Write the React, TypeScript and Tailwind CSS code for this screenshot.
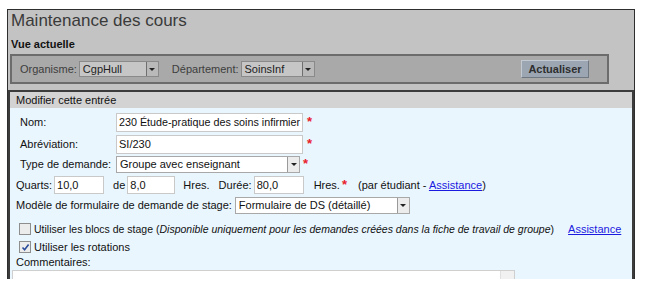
import { ReactNode } from "react";

const Star = () => (
  <span className="self-start text-[13px] font-bold leading-[12px] text-[#e8202a]">*</span>
);

const Arrow = ({ dark }: { dark?: boolean }) => (
  <span
    className={`flex h-full w-[12px] shrink-0 items-center justify-center border-l ${
      dark ? "border-[#6f6f6f] bg-[#b9b9b9]" : "border-[#9a9a9a] bg-[#ececec]"
    }`}
  >
    <span className="h-0 w-0 border-x-[3px] border-t-[3px] border-x-transparent border-t-[#222]" />
  </span>
);

const Select = ({
  value,
  className,
  dark,
}: {
  value: string;
  className: string;
  dark?: boolean;
}) => (
  <div
    className={`flex items-center border ${
      dark ? "border-[#8a8a8a] bg-[#c6c6c6] text-[#222]" : "border-[#a8a8a8] bg-white text-[#111]"
    } ${className}`}
  >
    <span className="flex-1 truncate pl-[3px]">{value}</span>
    <Arrow dark={dark} />
  </div>
);

const Input = ({ value, className }: { value: string; className: string }) => (
  <div
    className={`flex items-center overflow-hidden whitespace-nowrap border border-[#c9c9c9] bg-white pl-[2px] text-[#111] ${className}`}
  >
    {value}
  </div>
);

const Check = ({ checked }: { checked?: boolean }) => (
  <span className="flex h-[12px] w-[12px] shrink-0 items-center justify-center border border-[#8e8e8e] bg-[#ececec]">
    {checked && (
      <svg width="9" height="9" viewBox="0 0 9 9">
        <path d="M1.5 4.5 L3.6 6.8 L7.6 1.5" fill="none" stroke="#2c4d9c" strokeWidth="1.6" />
      </svg>
    )}
  </span>
);

const Link = ({ children }: { children: ReactNode }) => (
  <span className="text-[#1a1ae0] underline">{children}</span>
);

export default function App() {
  return (
    <div
      className="h-[287px] w-[645px] overflow-hidden bg-white pl-[7px] pt-[9px] text-[11px] leading-[13px] text-[#111]"
      style={{ fontFamily: '"Liberation Sans", Arial, sans-serif' }}
    >
      <div className="h-[270px] w-[628px] overflow-hidden border-x border-t border-[#2e2e2e] bg-[#c3c3c3]">
        {/* Title */}
        <div className="h-[21px] pl-[3px] text-[17px] leading-[21px] text-[#3a3a3a]">
          Maintenance des cours
        </div>
        <div className="flex h-[23px] items-end pb-[3px] pl-[3px] font-bold text-[#111]">
          Vue actuelle
        </div>

        {/* Vue actuelle box */}
        <div className="ml-[2px] flex h-[30px] w-[599px] items-center border-2 border-[#6c6c6c] bg-[#a9a9a9] pl-[8px] text-[#3d3d3d]">
          <span>Organisme:</span>
          <Select value="CgpHull" dark className="ml-[2px] h-[16px] w-[80px]" />
          <span className="ml-[13px]">Département:</span>
          <Select value="SoinsInf" dark className="ml-[2px] h-[16px] w-[74px]" />
          <button className="ml-auto mr-[18px] h-[18px] w-[68px] border border-t-[#c3cad2] border-l-[#c3cad2] border-b-[#6f7780] border-r-[#6f7780] bg-[#9ca6b3] text-[11px] font-bold text-[#2e2e2e]">
            Actualiser
          </button>
        </div>

        {/* Modifier panel */}
        <div className="mt-[6px] h-[200px] w-[626px] border-2 border-[#3c3c3c] bg-[#eaf6fe]">
          <div className="flex h-[16px] items-center bg-[#d3d3d3] pl-[6px] text-[#111]">
            Modifier cette entrée
          </div>

          <div className="mt-[5px] flex h-[19px] items-center pl-[10px]">
            <span className="w-[96px]">Nom:</span>
            <Input value="230 Étude-pratique des soins infirmier" className="h-[19px] w-[187px] text-[10.75px]" />
            <span className="ml-[4px]">
              <Star />
            </span>
          </div>
          <div className="mt-[3px] flex h-[19px] items-center pl-[10px]">
            <span className="w-[96px]">Abréviation:</span>
            <Input value="SI/230" className="h-[19px] w-[187px]" />
            <span className="ml-[4px]">
              <Star />
            </span>
          </div>
          <div className="mt-[2px] flex h-[17px] items-center pl-[10px]">
            <span className="w-[96px]">Type de demande:</span>
            <Select value="Groupe avec enseignant" className="h-[17px] w-[184px]" />
            <span className="ml-[3px]">
              <Star />
            </span>
          </div>

          <div className="mt-[3px] flex h-[18px] items-center pl-[6px]">
            <span>Quarts:</span>
            <Input value="10,0" className="ml-[2px] h-[18px] w-[50px]" />
            <span className="ml-[9px]">de</span>
            <Input value="8,0" className="ml-[2px] h-[18px] w-[48px]" />
            <span className="ml-[8px]">Hres.</span>
            <span className="ml-[9px]">Durée:</span>
            <Input value="80,0" className="ml-[2px] h-[18px] w-[50px]" />
            <span className="ml-[10px]">Hres.</span>
            <span className="ml-[2px]">
              <Star />
            </span>
            <span className="ml-[11px]">
              (par étudiant - <Link>Assistance</Link>)
            </span>
          </div>

          <div className="mt-[3px] flex h-[17px] items-center pl-[6px]">
            <span>Modèle de formulaire de demande de stage:</span>
            <Select value="Formulaire de DS (détaillé)" className="ml-[3px] h-[17px] w-[175px]" />
          </div>

          <div className="mt-[7px] flex h-[16px] items-center pl-[9px]">
            <Check />
            <span className="ml-[3px] whitespace-nowrap text-[10.5px]">
              Utiliser les blocs de stage (
              <i>Disponible uniquement pour les demandes créées dans la fiche de travail de groupe</i>)
            </span>
            <span className="ml-[14px] whitespace-nowrap">
              <Link>Assistance</Link>
            </span>
          </div>
          <div className="mt-[2px] flex h-[16px] items-center pl-[9px]">
            <Check checked />
            <span className="ml-[3px]">Utiliser les rotations</span>
          </div>
          <div className="flex h-[14px] items-center pl-[6px]">Commentaires:</div>

          <div className="ml-[2px] mt-[1px] flex h-[30px] w-[503px] border border-[#cfcfcf] bg-white">
            <div className="flex-1" />
            <div className="w-[14px] border-l border-[#e0e0e0] bg-[#f1f1f1]" />
          </div>
        </div>
      </div>
    </div>
  );
}
